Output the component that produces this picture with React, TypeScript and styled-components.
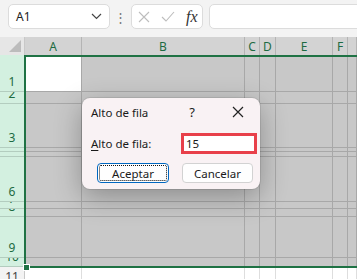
import React from 'react';
import styled, { createGlobalStyle } from 'styled-components';

const Global = createGlobalStyle`
  html, body { margin: 0; padding: 0; background: #f3f3f3; }
  body { width: 357px; height: 279px; overflow: hidden; font-family: "Noto Sans", "Open Sans", sans-serif; }
`;

const Page = styled.div`
  position: relative;
  width: 357px;
  height: 279px;
  overflow: hidden;
  background: #f3f3f3;
`;

const Toolbar = styled.div`
  display: flex;
  align-items: stretch;
  height: 25px;
  margin: 0 -10px 0 8px;
  padding: 4px 0 8px;
`;

const NameBox = styled.div`
  width: 102px;
  box-sizing: border-box;
  background: #fff;
  border: 1px solid #dcdcdc;
  border-radius: 5px;
  display: flex;
  align-items: center;
  justify-content: space-between;
  padding: 0 7px 0 7px;
  font-size: 12px;
  color: #222;
`;

const Dots = styled.div`
  width: 21px;
  display: flex;
  align-items: center;
  justify-content: center;
  color: #777;
  font-size: 13px;
`;

const FxGroup = styled.div`
  width: 72px;
  box-sizing: border-box;
  background: #fff;
  border: 1px solid #dcdcdc;
  border-radius: 5px;
  display: flex;
  align-items: center;
  padding-left: 6px;
  gap: 11px;
  margin-right: 6px;
`;

const Fx = styled.span`
  font-family: "Liberation Serif", "DejaVu Serif", serif;
  font-style: italic;
  font-size: 16px;
  color: #333;
`;

const FormulaInput = styled.div`
  flex: 1;
  background: #fff;
  border: 1px solid #dcdcdc;
  border-radius: 5px;
`;

const Sheet = styled.div`
  position: relative;
  display: grid;
  grid-template-columns: 25px 57px 163px 15px 16px 57px 15px 1fr;
  grid-template-rows: 18px 37px 12px 44px 4px 5px 45px 7px 8px 41px 9px 20px;
  font-family: "Noto Sans", "Open Sans", sans-serif;
`;

const Corner = styled.div`
  position: relative;
  background: #e6e6e6;
  border-right: 1px solid #c8c8c8;
  &::after {
    content: '';
    position: absolute;
    right: 3px;
    bottom: 3px;
    width: 0;
    height: 0;
    border-left: 12px solid transparent;
    border-bottom: 12px solid #bcbcbc;
  }
`;

const ColHead = styled.div`
  background: #d3d3d3;
  border-right: 1px solid #b4b4b4;
  color: #1d6b42;
  font-size: 12px;
  display: flex;
  align-items: center;
  justify-content: center;
  overflow: hidden;
`;

const RowHead = styled.div<{ $sel: boolean }>`
  background: ${p => (p.$sel ? '#d3f0e0' : '#f3f3f3')};
  color: ${p => (p.$sel ? '#1d6b42' : '#444')};
  border-bottom: 1px solid ${p => (p.$sel ? '#b3cdbf' : '#dcdcdc')};
  border-right: 1px solid #c8c8c8;
  font-size: 12px;
  line-height: 12px;
  display: flex;
  align-items: flex-end;
  justify-content: center;
  padding-bottom: 3px;
  box-sizing: border-box;
  overflow: hidden;
`;

const Cell = styled.div<{ $kind: 'sel' | 'active' | 'plain' }>`
  background: ${p => (p.$kind === 'sel' ? '#c8c8c8' : '#ffffff')};
  border-right: 1px solid ${p => (p.$kind === 'plain' ? '#dedede' : '#a8a8a8')};
  border-bottom: 1px solid ${p => (p.$kind === 'plain' ? '#dedede' : '#a8a8a8')};
  box-sizing: border-box;
`;

const Selection = styled.div`
  position: absolute;
  left: 24px;
  top: 18px;
  right: -10px;
  height: 213px;
  border: 2px solid #1f7244;
  box-sizing: border-box;
  pointer-events: none;
`;

const Handle = styled.div`
  position: absolute;
  left: 23px;
  top: 227px;
  width: 5px;
  height: 5px;
  background: #1f7244;
  border: 1px solid #fff;
`;

const Dialog = styled.div`
  position: absolute;
  left: 82px;
  top: 98px;
  width: 178px;
  height: 91px;
  box-sizing: border-box;
  background: #f9f2f4;
  border-radius: 8px;
  box-shadow: 0 0 0 1px rgba(0, 0, 0, 0.08), 0 8px 28px rgba(0, 0, 0, 0.3);
  display: flex;
  flex-direction: column;
  font-family: "Noto Sans", "Open Sans", sans-serif;
  font-size: 11.5px;
  color: #1a1a1a;
`;

const TitleBar = styled.div`
  height: 28px;
  display: flex;
  align-items: center;
  padding-left: 9px;
`;

const Title = styled.span`
  flex: 1;
`;

const Help = styled.span`
  width: 14px;
  text-align: center;
  font-size: 13px;
  margin-right: 33px;
`;

const Close = styled.div`
  width: 12px;
  height: 12px;
  display: flex;
  margin-right: 16px;
`;

const FieldRow = styled.div`
  margin-top: 7px;
  height: 21px;
  display: flex;
  align-items: center;
  padding-left: 9px;
`;

const Label = styled.span`
  width: 90px;
  u { text-decoration: underline; text-underline-offset: 2px; }
`;

const InputBox = styled.div`
  width: 76px;
  height: 21px;
  box-sizing: border-box;
  border: 3px solid #e8404a;
  background: #fff;
  display: flex;
  align-items: center;
  padding-left: 2px;
  font-size: 11.5px;
`;

const ButtonRow = styled.div`
  margin-top: 9px;
  display: flex;
  padding-left: 15px;
  gap: 13px;
`;

const Button = styled.div<{ $primary?: boolean }>`
  width: ${p => (p.$primary ? 72 : 71)}px;
  height: 20px;
  box-sizing: border-box;
  border-radius: 4px;
  background: #fefefe;
  border: 1px solid ${p => (p.$primary ? '#0067c0' : '#d2d2d2')};
  display: flex;
  align-items: center;
  justify-content: center;
  position: relative;
  font-size: 11.5px;
  ${p =>
    p.$primary
      ? `&::after { content: ''; position: absolute; inset: 1px; border: 1px dotted #111; border-radius: 2px; }`
      : ''}
`;

const colLetters = ['A', 'B', 'C', 'D', 'E', 'F', ''];
const rows = ['1', '2', '3', '4', '5', '6', '7', '8', '9', '10', '11'];

export default function App() {
  return (
    <Page>
      <Global />
      <Toolbar>
        <NameBox>
          <span>A1</span>
          <svg width="11" height="7" viewBox="0 0 11 7">
            <path d="M1 1l4.5 4.5L10 1" fill="none" stroke="#444" strokeWidth="1.2" />
          </svg>
        </NameBox>
        <Dots>⋮</Dots>
        <FxGroup>
          <svg width="12" height="12" viewBox="0 0 12 12">
            <path d="M1 1l10 10M11 1L1 11" stroke="#bdbdbd" strokeWidth="1.1" />
          </svg>
          <svg width="14" height="11" viewBox="0 0 14 11">
            <path d="M1 6l4 4L13 1" fill="none" stroke="#bdbdbd" strokeWidth="1.1" />
          </svg>
          <Fx>fx</Fx>
        </FxGroup>
        <FormulaInput />
      </Toolbar>
      <Sheet>
        <Corner />
        {colLetters.map((c, i) => (
          <ColHead key={i}>{c}</ColHead>
        ))}
        {rows.map((r, ri) => {
          const sel = ri < 10;
          return (
            <React.Fragment key={r}>
              <RowHead $sel={sel}>{r}</RowHead>
              {colLetters.map((_, ci) => (
                <Cell
                  key={ci}
                  $kind={!sel ? 'plain' : ri === 0 && ci === 0 ? 'active' : 'sel'}
                />
              ))}
            </React.Fragment>
          );
        })}
        <Selection />
        <Handle />
      </Sheet>
      <Dialog>
        <TitleBar>
          <Title>Alto de fila</Title>
          <Help>?</Help>
          <Close>
            <svg width="12" height="12" viewBox="0 0 12 12">
              <path d="M1 1l10 10M11 1L1 11" stroke="#222" strokeWidth="1.2" />
            </svg>
          </Close>
        </TitleBar>
        <FieldRow>
          <Label>
            <u>A</u>lto de fila:
          </Label>
          <InputBox>15</InputBox>
        </FieldRow>
        <ButtonRow>
          <Button $primary>Aceptar</Button>
          <Button>Cancelar</Button>
        </ButtonRow>
      </Dialog>
    </Page>
  );
}
